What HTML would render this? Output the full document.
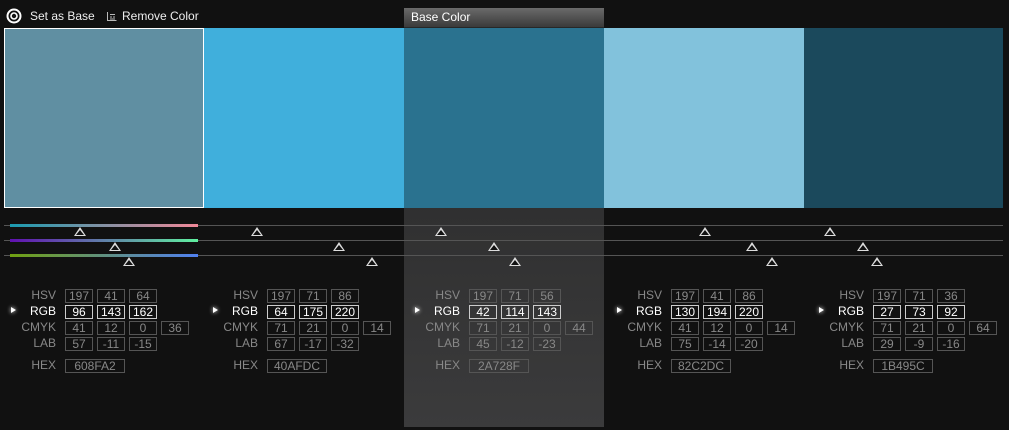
<!DOCTYPE html><html><head><style>
body{margin:0;width:1009px;height:430px;background:#111;position:relative;overflow:hidden;font-family:"Liberation Sans",sans-serif;}
.a{position:absolute}
.sw{position:absolute;top:28px;height:180px;width:200px}
.col{position:absolute;top:0;width:200px;height:430px}
.lb{position:absolute;right:148px;font-size:12px;color:#888;width:60px;text-align:right;line-height:13px}
.bx{position:absolute;width:26px;height:12px;border:1px solid #555;color:#888;font-size:12px;text-align:center;line-height:12px}
.w .lb{color:#fff}.w .bx{border-color:#ccc;color:#fff}
.ar{position:absolute;left:7px;top:307px;width:0;height:0;border-left:5px solid #fff;border-top:3.5px solid transparent;border-bottom:3.5px solid transparent;filter:drop-shadow(0 0 2px #fff)}
.ln{position:absolute;left:4px;width:999px;height:1px;background:#555}
.tr{position:absolute;width:0;height:0;border-left:6px solid transparent;border-right:6px solid transparent;border-bottom:9px solid #ddd}
.tr:after{content:"";position:absolute;left:-4px;top:2.5px;border-left:4px solid transparent;border-right:4px solid transparent;border-bottom:5.5px solid #111}
</style></head><body>
<div class="a" style="left:404px;top:8px;width:200px;height:419px;background:linear-gradient(#262626,#3b3b3c)"></div>
<div class="a" style="left:404px;top:8px;width:200px;height:19px;background:linear-gradient(#6a6a6a,#3a3a3a);color:#fff;font-size:12px;line-height:18px;padding-left:7px;box-sizing:border-box">Base Color</div>
<svg class="a" style="left:6px;top:8px" width="16" height="16"><circle cx="8" cy="8" r="6.5" fill="none" stroke="#fff" stroke-width="2"/><circle cx="8" cy="8" r="3" fill="none" stroke="#fff" stroke-width="1.6"/></svg>
<div class="a" style="left:30px;top:9px;color:#eee;font-size:12px">Set as Base</div>
<svg class="a" style="left:106px;top:11px" width="12" height="11"><path d="M1.5 1v8.5h9M4 3.5h5M4 6h2M7 6h2M4 8h5" stroke="#bbb" stroke-width="1" fill="none"/></svg>
<div class="a" style="left:122px;top:9px;color:#eee;font-size:12px">Remove Color</div>
<div class="sw" style="left:4px;background:#608fa2;border:1px solid #fff;box-sizing:border-box"></div>
<div class="sw" style="left:204px;background:#40afdc"></div>
<div class="sw" style="left:404px;background:#2a728f"></div>
<div class="sw" style="left:604px;background:#82c2dc"></div>
<div class="sw" style="left:804px;background:#1b495c;width:199px"></div>
<div class="ln" style="top:225px"></div><div class="ln" style="top:240px"></div><div class="ln" style="top:255px"></div>
<div class="a" style="left:10px;top:224px;width:188px;height:3px;background:linear-gradient(90deg,#1a9bb0,#f08898)"></div>
<div class="a" style="left:10px;top:239px;width:188px;height:3px;background:linear-gradient(90deg,#6010b0,#60f0a0)"></div>
<div class="a" style="left:10px;top:254px;width:188px;height:3px;background:linear-gradient(90deg,#70a010,#5080f0)"></div>
<div class="tr" style="left:74px;top:227px"></div><div class="tr" style="left:251px;top:227px"></div><div class="tr" style="left:435px;top:227px"></div><div class="tr" style="left:699px;top:227px"></div><div class="tr" style="left:824px;top:227px"></div>
<div class="tr" style="left:109px;top:242px"></div><div class="tr" style="left:333px;top:242px"></div><div class="tr" style="left:488px;top:242px"></div><div class="tr" style="left:746px;top:242px"></div><div class="tr" style="left:857px;top:242px"></div>
<div class="tr" style="left:123px;top:257px"></div><div class="tr" style="left:366px;top:257px"></div><div class="tr" style="left:509px;top:257px"></div><div class="tr" style="left:766px;top:257px"></div><div class="tr" style="left:871px;top:257px"></div>

<div class="col" style="left:4px"><div class="ar"></div>
<div class="lb" style="top:289px">HSV</div><div class="bx" style="left:61px;top:289px">197</div><div class="bx" style="left:93px;top:289px">41</div><div class="bx" style="left:125px;top:289px">64</div>
<div class="w"><div class="lb" style="top:305px">RGB</div><div class="bx" style="left:61px;top:305px">96</div><div class="bx" style="left:93px;top:305px">143</div><div class="bx" style="left:125px;top:305px">162</div></div>
<div class="lb" style="top:321px">CMYK</div><div class="bx" style="left:61px;top:321px">41</div><div class="bx" style="left:93px;top:321px">12</div><div class="bx" style="left:125px;top:321px">0</div><div class="bx" style="left:157px;top:321px">36</div>
<div class="lb" style="top:337px">LAB</div><div class="bx" style="left:61px;top:337px">57</div><div class="bx" style="left:93px;top:337px">-11</div><div class="bx" style="left:125px;top:337px">-15</div>
<div class="lb" style="top:359px">HEX</div><div class="bx" style="left:61px;top:359px;width:58px">608FA2</div></div>

<div class="col" style="left:206px"><div class="ar"></div>
<div class="lb" style="top:289px">HSV</div><div class="bx" style="left:61px;top:289px">197</div><div class="bx" style="left:93px;top:289px">71</div><div class="bx" style="left:125px;top:289px">86</div>
<div class="w"><div class="lb" style="top:305px">RGB</div><div class="bx" style="left:61px;top:305px">64</div><div class="bx" style="left:93px;top:305px">175</div><div class="bx" style="left:125px;top:305px">220</div></div>
<div class="lb" style="top:321px">CMYK</div><div class="bx" style="left:61px;top:321px">71</div><div class="bx" style="left:93px;top:321px">21</div><div class="bx" style="left:125px;top:321px">0</div><div class="bx" style="left:157px;top:321px">14</div>
<div class="lb" style="top:337px">LAB</div><div class="bx" style="left:61px;top:337px">67</div><div class="bx" style="left:93px;top:337px">-17</div><div class="bx" style="left:125px;top:337px">-32</div>
<div class="lb" style="top:359px">HEX</div><div class="bx" style="left:61px;top:359px;width:58px">40AFDC</div></div>

<div class="col" style="left:408px"><div class="ar"></div>
<div class="lb" style="top:289px">HSV</div><div class="bx" style="left:61px;top:289px">197</div><div class="bx" style="left:93px;top:289px">71</div><div class="bx" style="left:125px;top:289px">56</div>
<div class="w"><div class="lb" style="top:305px">RGB</div><div class="bx" style="left:61px;top:305px">42</div><div class="bx" style="left:93px;top:305px">114</div><div class="bx" style="left:125px;top:305px">143</div></div>
<div class="lb" style="top:321px">CMYK</div><div class="bx" style="left:61px;top:321px">71</div><div class="bx" style="left:93px;top:321px">21</div><div class="bx" style="left:125px;top:321px">0</div><div class="bx" style="left:157px;top:321px">44</div>
<div class="lb" style="top:337px">LAB</div><div class="bx" style="left:61px;top:337px">45</div><div class="bx" style="left:93px;top:337px">-12</div><div class="bx" style="left:125px;top:337px">-23</div>
<div class="lb" style="top:359px">HEX</div><div class="bx" style="left:61px;top:359px;width:58px">2A728F</div></div>

<div class="col" style="left:610px"><div class="ar"></div>
<div class="lb" style="top:289px">HSV</div><div class="bx" style="left:61px;top:289px">197</div><div class="bx" style="left:93px;top:289px">41</div><div class="bx" style="left:125px;top:289px">86</div>
<div class="w"><div class="lb" style="top:305px">RGB</div><div class="bx" style="left:61px;top:305px">130</div><div class="bx" style="left:93px;top:305px">194</div><div class="bx" style="left:125px;top:305px">220</div></div>
<div class="lb" style="top:321px">CMYK</div><div class="bx" style="left:61px;top:321px">41</div><div class="bx" style="left:93px;top:321px">12</div><div class="bx" style="left:125px;top:321px">0</div><div class="bx" style="left:157px;top:321px">14</div>
<div class="lb" style="top:337px">LAB</div><div class="bx" style="left:61px;top:337px">75</div><div class="bx" style="left:93px;top:337px">-14</div><div class="bx" style="left:125px;top:337px">-20</div>
<div class="lb" style="top:359px">HEX</div><div class="bx" style="left:61px;top:359px;width:58px">82C2DC</div></div>

<div class="col" style="left:812px"><div class="ar"></div>
<div class="lb" style="top:289px">HSV</div><div class="bx" style="left:61px;top:289px">197</div><div class="bx" style="left:93px;top:289px">71</div><div class="bx" style="left:125px;top:289px">36</div>
<div class="w"><div class="lb" style="top:305px">RGB</div><div class="bx" style="left:61px;top:305px">27</div><div class="bx" style="left:93px;top:305px">73</div><div class="bx" style="left:125px;top:305px">92</div></div>
<div class="lb" style="top:321px">CMYK</div><div class="bx" style="left:61px;top:321px">71</div><div class="bx" style="left:93px;top:321px">21</div><div class="bx" style="left:125px;top:321px">0</div><div class="bx" style="left:157px;top:321px">64</div>
<div class="lb" style="top:337px">LAB</div><div class="bx" style="left:61px;top:337px">29</div><div class="bx" style="left:93px;top:337px">-9</div><div class="bx" style="left:125px;top:337px">-16</div>
<div class="lb" style="top:359px">HEX</div><div class="bx" style="left:61px;top:359px;width:58px">1B495C</div></div>
</body></html>
